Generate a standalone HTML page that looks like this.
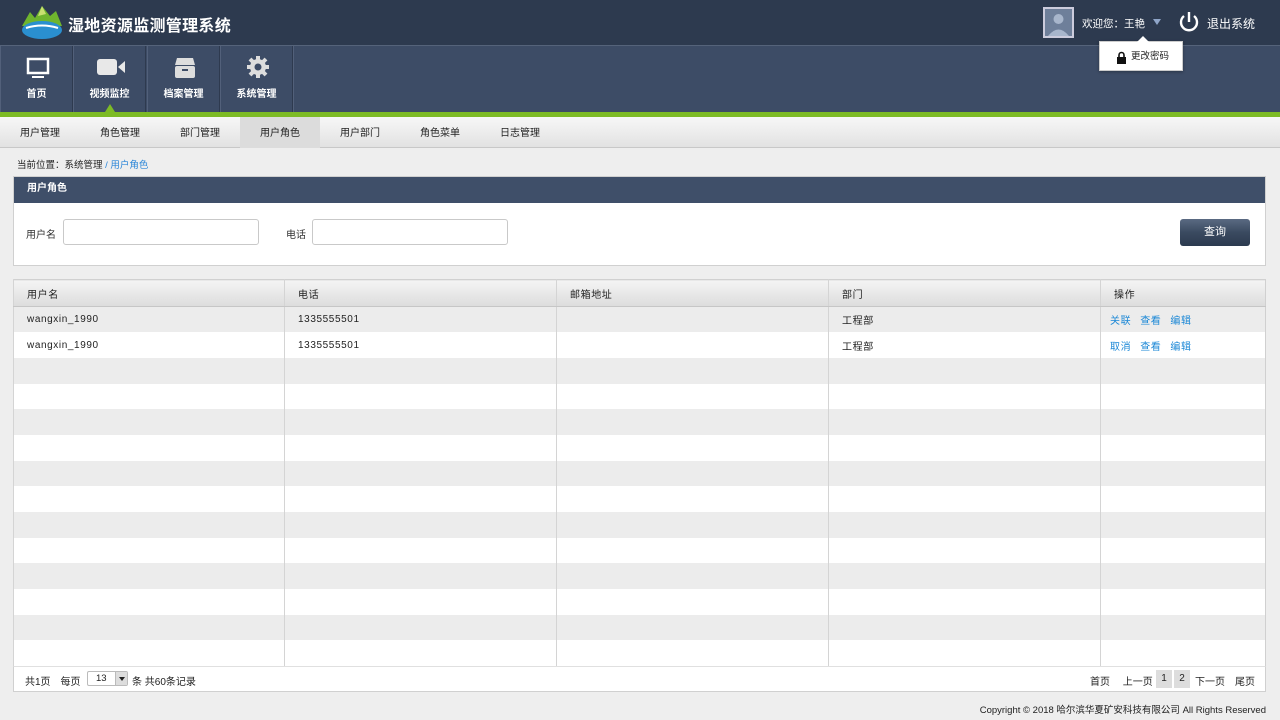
<!DOCTYPE html>
<html><head><meta charset="utf-8"><style>
*{margin:0;padding:0;box-sizing:border-box}
body{width:1280px;height:720px;overflow:hidden;background:#eeeeee;font-family:"Liberation Sans","Noto Sans CJK SC",sans-serif;font-size:10px;color:#222;position:relative}
.top{position:absolute;left:0;top:0;width:1280px;height:46px;background:#2d3a4f;border-bottom:1px solid #55637a}
.title{position:absolute;left:68px;top:12px;color:#fff;font-size:16px;font-weight:bold;letter-spacing:0.3px}
.nav{position:absolute;left:0;top:46px;width:1280px;height:66px;background:#3d4c66}
.ni{position:absolute;top:0;height:66px;width:73px;border-right:1px solid #2e3a4f;border-left:1px solid #52607a;color:#fff;text-align:center;font-size:10px;font-weight:bold}
.ni span{position:absolute;left:0;right:0;top:39px}
.green{position:absolute;left:0;top:112px;width:1280px;height:5px;background:#7dbb25}
.sub{position:absolute;left:0;top:117px;width:1280px;height:31px;background:linear-gradient(#f7f7f7,#e2e2e2);border-bottom:1px solid #c8c8c8}
.sub div{position:absolute;top:0;height:31px;width:80px;line-height:33px;text-align:center;font-size:10px;color:#222}
.crumb{position:absolute;left:17px;top:157px;font-size:9.5px}
.panel{position:absolute;left:13px;top:176px;width:1253px;height:90px;background:#fff;border:1px solid #d0d0d0}
.ph{height:26px;background:#3f4f69;color:#fff;font-size:10px;line-height:24px;padding-left:13px;font-weight:bold}
.inp{position:absolute;top:42px;height:26px;border:1px solid #c9c9c9;border-radius:3px;background:#fff}
.lbl{position:absolute;top:49px;font-size:10px;color:#333}
.btn{position:absolute;left:1166px;top:42px;width:70px;height:27px;border-radius:3px;background:linear-gradient(#5a6a82,#3a4a60 50%,#2c3a4f);color:#fff;text-align:center;line-height:27px;font-size:11px}
table{position:absolute;left:13px;top:279px;width:1253px;border-collapse:collapse;background:#fff;border:1px solid #d0d0d0}
td,th{border-left:1px solid #d4d4d4;height:25.7px;padding-left:13px;text-align:left;font-size:10px;font-weight:normal;letter-spacing:0.6px;vertical-align:middle}
th{height:27px;background:linear-gradient(#f4f4f4,#dcdcdc);border-bottom:1px solid #c6c6c6}
tr.g td{background:#ececec}
.a{color:#1a87d6;margin-right:9px}
.foot{position:absolute;left:13px;top:666px;width:1253px;height:26px;background:#fff;border:1px solid #d0d0d0;border-top:1px solid #e0e0e0}
</style></head><body>
<div class="top">
<svg style="position:absolute;left:20px;top:4px" width="44" height="36" viewBox="0 0 44 36"><path d="M2 22 L10 8 L15 14 L22 2 L30 12 L36 7 L42 22Z" fill="#6fb52e"/><path d="M22 2 L26 10 L18 12Z" fill="#c8e070"/><ellipse cx="22" cy="26" rx="20" ry="9" fill="#2a8fd0"/><path d="M6 24 Q22 19 38 24" stroke="#fff" stroke-width="2" fill="none"/></svg>
<div class="title">湿地资源监测管理系统</div>
<div style="position:absolute;left:1043px;top:7px;width:31px;height:31px;border:2px solid #ccd;background:#6e7f9a"><svg width="27" height="27"><circle cx="13.5" cy="10" r="5" fill="#a8b6cc"/><path d="M3 27 Q13.5 14 24 27Z" fill="#a8b6cc"/></svg></div>
<div style="position:absolute;left:1082px;top:16px;color:#fff;font-size:10.5px">欢迎您：王艳</div>
<div style="position:absolute;left:1153px;top:19px;width:0;height:0;border-left:4px solid transparent;border-right:4px solid transparent;border-top:6px solid #8fa5c8"></div>
<svg style="position:absolute;left:1178px;top:11px" width="22" height="22"><path d="M6 5 A8 8 0 1 0 16 5" stroke="#fff" stroke-width="2.4" fill="none"/><line x1="11" y1="1" x2="11" y2="11" stroke="#fff" stroke-width="2.4"/></svg>
<div style="position:absolute;left:1207px;top:15px;color:#fff;font-size:12px">退出系统</div>
</div>
<div class="nav">
<div class="ni" style="left:0"><svg style="position:absolute;left:25px;top:11px" width="24" height="22"><rect x="2" y="2" width="20" height="14" stroke="#fff" stroke-width="2.5" fill="none"/><rect x="6" y="19" width="12" height="2" fill="#fff"/></svg><span>首页</span></div>
<div class="ni" style="left:73px"><svg style="position:absolute;left:22px;top:12px" width="30" height="18"><rect x="1" y="1" width="20" height="16" rx="3" fill="#e8e8e8"/><path d="M22 9 L29 3 L29 15Z" fill="#e8e8e8"/></svg><span>视频监控</span><div style="position:absolute;left:31px;top:58px;border-left:5px solid transparent;border-right:5px solid transparent;border-bottom:8px solid #7dbb25"></div></div>
<div class="ni" style="left:147px"><svg style="position:absolute;left:25px;top:10px" width="24" height="24"><path d="M4 2 H20 L22 9 H2Z" fill="#ddd"/><rect x="2" y="10" width="20" height="12" rx="2" fill="#ddd"/><rect x="9" y="13" width="6" height="2" fill="#3d4c66"/></svg><span>档案管理</span></div>
<div class="ni" style="left:220px"><svg style="position:absolute;left:25px;top:9px" width="24" height="24" viewBox="0 0 24 24"><circle cx="12" cy="12" r="8" fill="#ddd"/><g stroke="#ddd" stroke-width="4"><line x1="12" y1="1" x2="12" y2="23"/><line x1="1" y1="12" x2="23" y2="12"/><line x1="4" y1="4" x2="20" y2="20"/><line x1="20" y1="4" x2="4" y2="20"/></g><circle cx="12" cy="12" r="3.5" fill="#3d4c66"/></svg><span>系统管理</span></div>
<div class="ni" style="left:293px;width:0;border-right:none"></div>
</div>
<div style="position:absolute;left:1099px;top:41px;width:84px;height:30px;background:#fff;border:1px solid #ccc;box-shadow:0 1px 3px rgba(0,0,0,.3);font-size:9.5px;line-height:30px;padding-left:31px">更改密码<svg style="position:absolute;left:16px;top:9px" width="11" height="13"><path d="M3 6 V4 A2.5 2.5 0 0 1 8 4 V6" stroke="#111" stroke-width="1.6" fill="none"/><rect x="1" y="6" width="9" height="7" fill="#111"/></svg></div>
<div style="position:absolute;left:1137px;top:36px;border-left:6px solid transparent;border-right:6px solid transparent;border-bottom:6px solid #fff"></div>
<div class="green"></div>
<div class="sub"><div style="left:0">用户管理</div><div style="left:80px">角色管理</div><div style="left:160px">部门管理</div><div style="left:240px;background:#dcdcdc">用户角色</div><div style="left:320px">用户部门</div><div style="left:400px">角色菜单</div><div style="left:480px">日志管理</div></div>
<div class="crumb">当前位置：系统管理<span style="color:#2b86d8"> / 用户角色</span></div>
<div class="panel"><div class="ph">用户角色</div>
<div class="lbl" style="left:12px">用户名</div><div class="inp" style="left:49px;width:196px"></div>
<div class="lbl" style="left:272px">电话</div><div class="inp" style="left:298px;width:196px"></div>
<div class="btn">查询</div></div>
<table>
<tr><th style="width:271px">用户名</th><th style="width:272px">电话</th><th style="width:272px">邮箱地址</th><th style="width:272px">部门</th><th>操作</th></tr>
<tr class="g"><td>wangxin_1990</td><td>1335555501</td><td></td><td>工程部</td><td style="padding-left:9px"><span class="a">关联</span><span class="a">查看</span><span class="a">编辑</span></td></tr>
<tr><td>wangxin_1990</td><td>1335555501</td><td></td><td>工程部</td><td style="padding-left:9px"><span class="a">取消</span><span class="a">查看</span><span class="a">编辑</span></td></tr>
<tr class="g"><td></td><td></td><td></td><td></td><td></td></tr><tr><td></td><td></td><td></td><td></td><td></td></tr>
<tr class="g"><td></td><td></td><td></td><td></td><td></td></tr><tr><td></td><td></td><td></td><td></td><td></td></tr>
<tr class="g"><td></td><td></td><td></td><td></td><td></td></tr><tr><td></td><td></td><td></td><td></td><td></td></tr>
<tr class="g"><td></td><td></td><td></td><td></td><td></td></tr><tr><td></td><td></td><td></td><td></td><td></td></tr>
<tr class="g"><td></td><td></td><td></td><td></td><td></td></tr><tr><td></td><td></td><td></td><td></td><td></td></tr>
<tr class="g"><td></td><td></td><td></td><td></td><td></td></tr><tr><td></td><td></td><td></td><td></td><td></td></tr>
</table>
<div class="foot">
<div style="position:absolute;left:11px;top:6px">共1页　每页</div>
<div style="position:absolute;left:73px;top:4px;width:41px;height:15px;border:1px solid #bbb;border-radius:2px;font-size:9.5px;padding-left:8px;line-height:13px">13<div style="position:absolute;right:0;top:0;width:12px;height:13px;background:#ddd;border-left:1px solid #bbb"><div style="position:absolute;left:3px;top:5px;border-left:3px solid transparent;border-right:3px solid transparent;border-top:4px solid #222"></div></div></div>
<div style="position:absolute;left:118px;top:6px">条 共60条记录</div>
<div style="position:absolute;left:1076px;top:6px">首页　 上一页</div>
<div style="position:absolute;left:1142px;top:3px;width:16px;height:18px;background:#ddd;text-align:center;line-height:18px">1</div>
<div style="position:absolute;left:1160px;top:3px;width:16px;height:18px;background:#ddd;text-align:center;line-height:18px">2</div>
<div style="position:absolute;left:1181px;top:6px">下一页　尾页</div>
</div>
<div style="position:absolute;right:14px;top:702px;font-size:9.5px;color:#222">Copyright © 2018 哈尔滨华夏矿安科技有限公司 All Rights Reserved</div>
</body></html>
